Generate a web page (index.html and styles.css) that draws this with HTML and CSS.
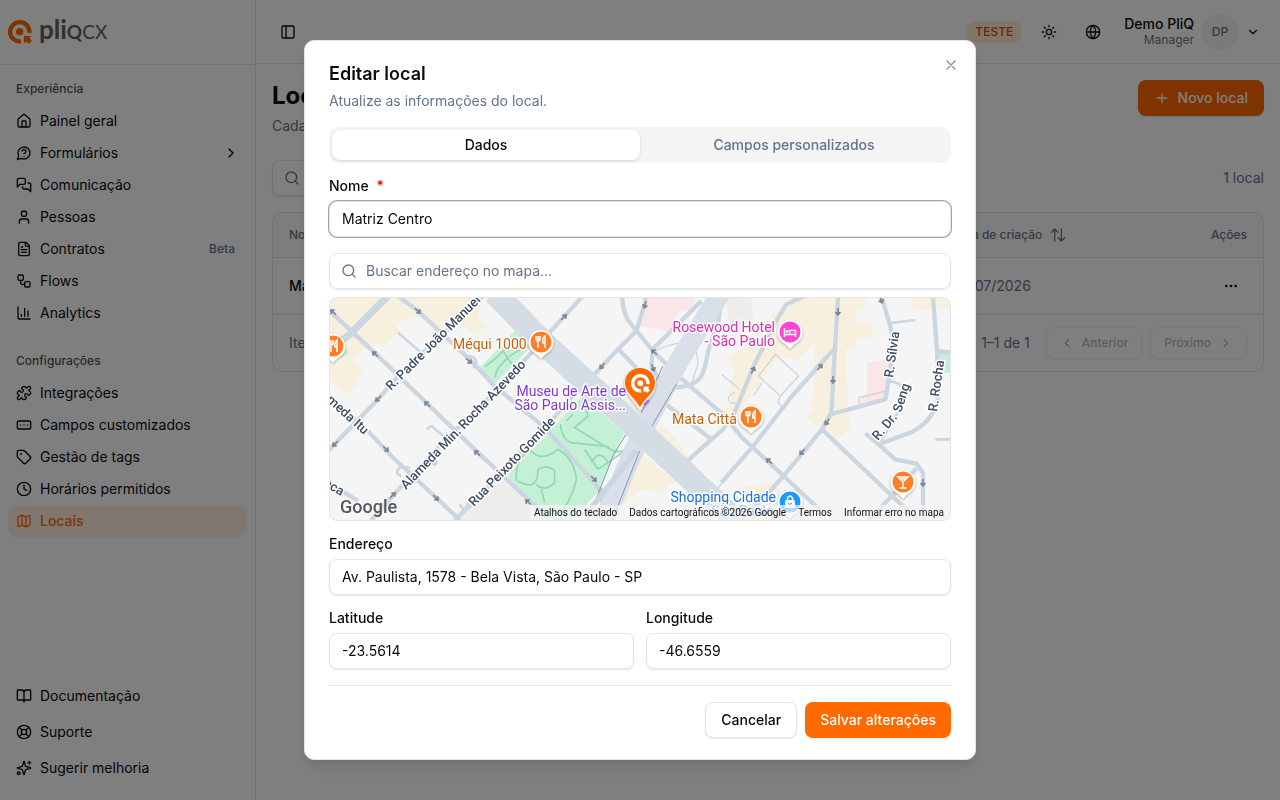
FILE: index.html
```html
<!DOCTYPE html>
<html lang="pt-BR">
<head>
<meta charset="utf-8">
<meta name="viewport" content="width=device-width, initial-scale=1">
<title>Locais</title>
<link rel="stylesheet" href="styles.css">
</head>
<body>
<svg class="sprite" aria-hidden="true">
  <symbol id="i-house" viewBox="0 0 24 24"><path d="M15 21v-8a1 1 0 0 0-1-1h-4a1 1 0 0 0-1 1v8"/><path d="M3 10a2 2 0 0 1 .709-1.528l7-5.999a2 2 0 0 1 2.582 0l7 5.999A2 2 0 0 1 21 10v9a2 2 0 0 1-2 2H5a2 2 0 0 1-2-2z"/></symbol>
  <symbol id="i-question" viewBox="0 0 24 24"><path d="M7.9 20A9 9 0 1 0 4 16.1L2 22Z"/><path d="M9.09 9a3 3 0 0 1 5.83 1c0 2-3 3-3 3M12 17h.01"/></symbol>
  <symbol id="i-messages" viewBox="0 0 24 24"><path d="M14 9a2 2 0 0 1-2 2H6l-4 4V4a2 2 0 0 1 2-2h8a2 2 0 0 1 2 2z"/><path d="M18 9h2a2 2 0 0 1 2 2v11l-4-4h-6a2 2 0 0 1-2-2v-1"/></symbol>
  <symbol id="i-user" viewBox="0 0 24 24"><path d="M19 21v-2a4 4 0 0 0-4-4H9a4 4 0 0 0-4 4v2"/><circle cx="12" cy="7" r="4"/></symbol>
  <symbol id="i-file" viewBox="0 0 24 24"><path d="M15 2H6a2 2 0 0 0-2 2v16a2 2 0 0 0 2 2h12a2 2 0 0 0 2-2V7Z"/><path d="M14 2v4a2 2 0 0 0 2 2h4M10 9H8M16 13H8M16 17H8"/></symbol>
  <symbol id="i-flow" viewBox="0 0 24 24"><rect x="3" y="3" width="8" height="8" rx="2"/><path d="M7 11v4a2 2 0 0 0 2 2h4"/><rect x="13" y="13" width="8" height="8" rx="2"/></symbol>
  <symbol id="i-chart" viewBox="0 0 24 24"><path d="M3 3v16a2 2 0 0 0 2 2h16M18 17V9M13 17V5M8 17v-3"/></symbol>
  <symbol id="i-puzzle" viewBox="0 0 24 24"><path d="M15.39 4.39a1 1 0 0 0 1.68-.474 2.5 2.5 0 1 1 3.014 3.015 1 1 0 0 0-.474 1.68l1.683 1.682a2.414 2.414 0 0 1 0 3.414L19.61 15.39a1 1 0 0 1-1.68-.474 2.5 2.5 0 1 0-3.014 3.015 1 1 0 0 1 .474 1.68l-1.683 1.682a2.414 2.414 0 0 1-3.414 0L8.61 19.61a1 1 0 0 0-1.68.474 2.5 2.5 0 1 1-3.014-3.015 1 1 0 0 0 .474-1.68l-1.683-1.682a2.414 2.414 0 0 1 0-3.414L4.39 8.61a1 1 0 0 1 1.68.474 2.5 2.5 0 1 0 3.014-3.015 1 1 0 0 1-.474-1.68l1.683-1.682a2.414 2.414 0 0 1 3.414 0z"/></symbol>
  <symbol id="i-fields" viewBox="0 0 24 24"><rect x="2" y="6" width="20" height="12" rx="2"/><path d="M12 12h.01M17 12h.01M7 12h.01"/></symbol>
  <symbol id="i-tag" viewBox="0 0 24 24"><path d="M12.586 2.586A2 2 0 0 0 11.172 2H4a2 2 0 0 0-2 2v7.172a2 2 0 0 0 .586 1.414l8.704 8.704a2.426 2.426 0 0 0 3.42 0l6.58-6.58a2.426 2.426 0 0 0 0-3.42z"/><circle cx="7.5" cy="7.5" r=".5"/></symbol>
  <symbol id="i-clock" viewBox="0 0 24 24"><circle cx="12" cy="12" r="10"/><path d="M12 6v6l4 2"/></symbol>
  <symbol id="i-map" viewBox="0 0 24 24"><path d="M14.106 5.553a2 2 0 0 0 1.788 0l3.659-1.83A1 1 0 0 1 21 4.619v12.764a1 1 0 0 1-.553.894l-4.553 2.277a2 2 0 0 1-1.788 0l-4.212-2.106a2 2 0 0 0-1.788 0l-3.659 1.83A1 1 0 0 1 3 19.381V6.618a1 1 0 0 1 .553-.894l4.553-2.277a2 2 0 0 1 1.788 0zM15 5.764v15M9 3.236v15"/></symbol>
  <symbol id="i-book" viewBox="0 0 24 24"><path d="M12 7v14M3 18a1 1 0 0 1-1-1V4a1 1 0 0 1 1-1h5a4 4 0 0 1 4 4 4 4 0 0 1 4-4h5a1 1 0 0 1 1 1v13a1 1 0 0 1-1 1h-6a3 3 0 0 0-3 3 3 3 0 0 0-3-3z"/></symbol>
  <symbol id="i-buoy" viewBox="0 0 24 24"><circle cx="12" cy="12" r="10"/><circle cx="12" cy="12" r="4"/><path d="m4.93 4.93 4.24 4.24M14.83 9.17l4.24-4.24M14.83 14.83l4.24 4.24M9.17 14.83l-4.24 4.24"/></symbol>
  <symbol id="i-sparkles" viewBox="0 0 24 24"><path d="M9.937 15.5A2 2 0 0 0 8.5 14.063l-6.135-1.582a.5.5 0 0 1 0-.962L8.5 9.936A2 2 0 0 0 9.937 8.5l1.582-6.135a.5.5 0 0 1 .963 0L14.063 8.5A2 2 0 0 0 15.5 9.937l6.135 1.581a.5.5 0 0 1 0 .964L15.5 14.063a2 2 0 0 0-1.437 1.437l-1.582 6.135a.5.5 0 0 1-.963 0zM20 2v4M22 4h-4"/><circle cx="4" cy="20" r="2"/></symbol>
  <symbol id="i-right" viewBox="0 0 24 24"><path d="m9 18 6-6-6-6"/></symbol>
  <symbol id="i-left" viewBox="0 0 24 24"><path d="m15 18-6-6 6-6"/></symbol>
  <symbol id="i-down" viewBox="0 0 24 24"><path d="m6 9 6 6 6-6"/></symbol>
  <symbol id="i-panel" viewBox="0 0 24 24"><rect x="3" y="3" width="18" height="18" rx="2"/><path d="M9 3v18"/></symbol>
  <symbol id="i-sun" viewBox="0 0 24 24"><circle cx="12" cy="12" r="4"/><path d="M12 2v2M12 20v2M4.93 4.93l1.41 1.41M17.66 17.66l1.41 1.41M2 12h2M20 12h2M6.34 17.66l-1.41 1.41M19.07 4.93l-1.41 1.41"/></symbol>
  <symbol id="i-globe" viewBox="0 0 24 24"><circle cx="12" cy="12" r="10"/><path d="M12 2a14.5 14.5 0 0 0 0 20 14.5 14.5 0 0 0 0-20M2 12h20"/></symbol>
  <symbol id="i-plus" viewBox="0 0 24 24"><path d="M5 12h14M12 5v14"/></symbol>
  <symbol id="i-search" viewBox="0 0 24 24"><circle cx="11" cy="11" r="8"/><path d="m21 21-4.3-4.3"/></symbol>
  <symbol id="i-sort" viewBox="0 0 24 24"><path d="M7 21V3M2 8l5-5 5 5M17 3v18M12 16l5 5 5-5"/></symbol>
  <symbol id="i-dots" viewBox="0 0 24 24"><g fill="currentColor"><circle cx="12" cy="12" r="1"/><circle cx="19" cy="12" r="1"/><circle cx="5" cy="12" r="1"/></g></symbol>
  <symbol id="i-close" viewBox="0 0 24 24"><path d="M18 6 6 18M6 6l12 12"/></symbol>
  <symbol id="brand" viewBox="0 0 72 72"><path d="M64 39A29 29 0 1 0 39 64" fill="none" stroke="currentColor" stroke-width="13" stroke-linecap="butt"/><circle cx="35" cy="35" r="11" fill="currentColor" stroke="none"/><path d="M48 48H70L64 54 71 62 62 71 54 64 48 70Z" fill="currentColor" stroke="currentColor" stroke-width="1" stroke-linejoin="round"/></symbol>
  <symbol id="drop" viewBox="0 0 28 32"><path d="M14 1A12.500 12.500 0 0 1 22 23Q17 26 14 30 11 26 6 23A12.500 12.500 0 0 1 14 1Z" fill="#fff"/></symbol>
  <symbol id="arrow" viewBox="-5 -5 10 10"><path d="M-4 0H3M0 -2.500L3 0 0 2.500" fill="#7b8896" stroke="#7b8896" stroke-width="1.600"/></symbol>
</svg>

<div class="app">
  <aside class="sidebar">
    <a class="brand" href="#" aria-label="pliQcx"><svg class="brand-mark"><use href="#brand"/></svg><span class="brand-name">pli<span class="brand-cap">Q</span><span class="brand-cap brand-thin">CX</span></span></a>
    <nav class="nav">
      <h2 class="nav-title">Experiência</h2>
      <a class="nav-item" href="#"><svg class="icon"><use href="#i-house"/></svg>Painel geral</a>
      <a class="nav-item" href="#"><svg class="icon"><use href="#i-question"/></svg>Formulários<svg class="icon end"><use href="#i-right"/></svg></a>
      <a class="nav-item" href="#"><svg class="icon"><use href="#i-messages"/></svg>Comunicação</a>
      <a class="nav-item" href="#"><svg class="icon"><use href="#i-user"/></svg>Pessoas</a>
      <a class="nav-item" href="#"><svg class="icon"><use href="#i-file"/></svg>Contratos<span class="beta end">Beta</span></a>
      <a class="nav-item" href="#"><svg class="icon"><use href="#i-flow"/></svg>Flows</a>
      <a class="nav-item" href="#"><svg class="icon"><use href="#i-chart"/></svg>Analytics</a>
    </nav>
    <nav class="nav">
      <h2 class="nav-title">Configurações</h2>
      <a class="nav-item" href="#"><svg class="icon"><use href="#i-puzzle"/></svg>Integrações</a>
      <a class="nav-item" href="#"><svg class="icon"><use href="#i-fields"/></svg>Campos customizados</a>
      <a class="nav-item" href="#"><svg class="icon"><use href="#i-tag"/></svg>Gestão de tags</a>
      <a class="nav-item" href="#"><svg class="icon"><use href="#i-clock"/></svg>Horários permitidos</a>
      <a class="nav-item active" href="#" aria-current="page"><svg class="icon"><use href="#i-map"/></svg>Locais</a>
    </nav>
    <nav class="nav nav-foot">
      <a class="nav-item" href="#"><svg class="icon"><use href="#i-book"/></svg>Documentação</a>
      <a class="nav-item" href="#"><svg class="icon"><use href="#i-buoy"/></svg>Suporte</a>
      <a class="nav-item" href="#"><svg class="icon"><use href="#i-sparkles"/></svg>Sugerir melhoria</a>
    </nav>
  </aside>

  <div class="page">
    <header class="topbar">
      <button class="icon-btn" aria-label="Alternar menu"><svg class="icon"><use href="#i-panel"/></svg></button>
      <div class="topbar-right">
        <span class="chip">TESTE</span>
        <button class="icon-btn" aria-label="Tema"><svg class="icon"><use href="#i-sun"/></svg></button>
        <button class="icon-btn" aria-label="Idioma"><svg class="icon"><use href="#i-globe"/></svg></button>
        <button class="account"><span class="who"><span class="who-name">Demo PliQ</span><span class="who-role">Manager</span></span><span class="avatar">DP</span><svg class="icon small"><use href="#i-down"/></svg></button>
      </div>
    </header>
    <main class="content">
      <div class="row-between head">
        <div><h1 class="title">Locais</h1><p class="muted">Cadastre os locais</p></div>
        <button class="btn primary wide"><svg class="icon"><use href="#i-plus"/></svg>Novo local</button>
      </div>
      <div class="row-between tools">
        <label class="search short"><svg class="icon"><use href="#i-search"/></svg><input class="search-input" type="search" aria-label="Buscar"></label>
        <span class="muted">1 local</span>
      </div>
      <div class="card">
        <table class="table">
          <thead><tr><th class="col-name">Nome</th><th class="col-date"><span class="sort">Data de criação<svg class="icon"><use href="#i-sort"/></svg></span></th><th class="col-act">Ações</th></tr></thead>
          <tbody><tr><td class="strong">Matriz</td><td>02/07/2026</td><td class="col-act"><button class="icon-btn" aria-label="Ações"><svg class="icon"><use href="#i-dots"/></svg></button></td></tr></tbody>
        </table>
        <div class="pager">
          <span>Itens</span>
          <div class="pager-right"><span>1–1 de 1</span>
            <div class="pager-btns"><button class="btn outline sm" disabled><svg class="icon small"><use href="#i-left"/></svg>Anterior</button><button class="btn outline sm" disabled>Próximo<svg class="icon small"><use href="#i-right"/></svg></button></div>
          </div>
        </div>
      </div>
    </main>
  </div>
</div>

<div class="overlay">
  <form class="modal" role="dialog" aria-modal="true" aria-labelledby="dlg-title">
    <button class="close" type="button" aria-label="Fechar"><svg class="icon"><use href="#i-close"/></svg></button>
    <div class="modal-head"><h2 class="modal-title" id="dlg-title">Editar local</h2><p class="muted">Atualize as informações do local.</p></div>
    <div class="tabs" role="tablist"><button class="tab selected" type="button" role="tab" aria-selected="true">Dados</button><button class="tab" type="button" role="tab" aria-selected="false">Campos personalizados</button></div>
    <div class="field"><label class="label" for="nome">Nome <span class="req">*</span></label><input class="input focused" id="nome" value="Matriz Centro"></div>
    <div class="map-group">
      <label class="search"><svg class="icon"><use href="#i-search"/></svg><input class="search-input" type="text" aria-label="Buscar endereço no mapa" placeholder="Buscar endereço no mapa…"></label>
      <div class="map">
        <svg class="map-art" viewBox="2 2 620 222" preserveAspectRatio="xMidYMid slice" role="img" aria-label="Mapa da região da Avenida Paulista">
          <g transform="scale(.33333)">
            <g fill="#f8f0df">
              <path d="M0 0H190L460 0 450 60 475 90 440 118 400 80 340 112 280 60 245 65 205 85 215 105 165 155 140 140 105 160 75 195 105 225 80 245 95 265 55 295 0 250Z"/>
              <path d="M505 522L720 335 740 350 530 545ZM885 320L930 290 975 350 935 375ZM960 415L1005 385 1115 520 1080 550ZM935 470L1050 560 1020 570 1005 590 940 580 870 640 905 530Z"/>
              <path d="M1402 0H1617L1607 40 1587 45 1582 85 1625 80 1638 105 1622 128 1587 130 1582 155 1552 160 1562 340 1567 390 1532 432 1492 410 1437 365 1452 340 1457 200 1462 140 1412 190 1350 185 1317 230 1270 300 1220 355 1165 390 1170 360 1210 320 1200 280 1220 230 1205 190 1260 140 1310 80Z"/>
              <path d="M1745 0H1870V35L1757 43ZM1230 575L1332 560 1470 672H1210Z"/>
            </g>
            <path d="M380 672L540 540 690 672ZM1190 0H1270L1275 70 1210 110Z" fill="#efedec"/>
            <path d="M455 215L565 100 612 150 500 263ZM538 540L765 300 888 412 815 580 735 672H670ZM1830 173H1870V230H1842ZM30 165L55 155 62 175 40 185Z" fill="#c4f1d6"/>
            <path d="M965 0H1102L1095 42 1050 48 1030 108 938 90ZM1617 200L1682 190 1675 305 1587 325 1617 290Z" fill="#fbe6e7"/>
            <g fill="none" stroke="#cbd6e0" stroke-width="13" stroke-linejoin="round">
              <path d="M0 40L145 175 300 325 450 470 660 665M210 0L270 45 430 195 500 270 650 395 800 560 820 590M0 465L150 310 220 230 350 110 465 0M0 298L120 405 190 480 330 610 395 672M0 565L50 590 90 615M130 672L230 560 385 400 500 290 615 165M660 115L705 65 765 0M380 672L430 625 560 490 640 410 755 275M795 240L870 160 925 105 952 20V0"/>
              <path d="M870 158L925 215M882 0Q885 60 910 85L975 165 1045 235 1185 355 1242 425 1367 540 1490 655M968 165L1030 105 1120 15M975 160L970 210 1000 260Q1030 285 1090 265C1150 240 1120 170 1170 90L1180 0M975 295L1150 430M1070 503L1150 430 1185 400 1220 350 1277 210 1342 80 1375 25 1430 0M1180 560L1272 455 1392 300 1517 160M1530 0L1510 350 1482 400 1367 540 1322 590 1240 672M1507 355L1672 310 1682 255 1697 150 1687 90 1660 0M1815 0L1827 165 1832 290Q1825 370 1752 408L1652 445 1702 490 1765 503 1785 530V672M1612 412L1652 445M1482 400L1692 600 1770 672M1765 518L1692 600 1620 672M1827 165L1870 170"/>
              <path d="M0 160L60 120 180 0" stroke-width="22"/>
              <path d="M210 110L280 170M295 400L310 390 370 440M245 518C220 500 190 530 220 540M420 180C450 180 450 210 435 215M310 500Q325 512 325 495M395 625L410 645 420 620M1680 82L1762 72M1822 430H1870M1682 255Q1745 265 1728 310T1652 445" stroke-width="8"/>
              <path d="M1292 240L1342 175 1412 240 1357 300ZM1357 300L1350 320 1367 335M1302 260L1277 300M970 170Q1110 100 1110 205L1085 280M1000 280V350L950 420M1180 235L1235 280M1220 290C1190 300 1200 330 1225 320M1150 600L1260 470M1592 325V305Q1620 300 1672 285" stroke-width="4"/>
            </g>
            <g fill="none" stroke="#93d8b4" stroke-width="5">
              <path d="M470 212Q520 180 560 120M500 245Q510 190 600 150M525 165L555 210"/>
              <path d="M698 385Q700 430 730 440L840 452Q862 480 905 455M765 305L780 360 740 395 850 462M735 355L715 375M810 520L905 455M810 520L770 460M790 500Q815 455 840 500"/>
              <path d="M565 555Q560 480 610 465 640 500 690 460 740 490 745 550 735 600 705 640M570 555Q630 590 630 520 660 505 680 525V560Q650 590 625 565M640 580L650 620M820 575V620L870 625"/>
            </g>
            <path d="M1185 -20L1050 200 965 365 910 480 830 672" fill="none" stroke="#d8dfe8" stroke-width="60"/>
            <path d="M900 405L855 480 780 672M1005 210L940 350M935 465L860 655M1045 265L960 410" fill="none" stroke="#8195b5" stroke-width="3"/>
            <path d="M770 660L925 465" fill="none" stroke="#cbd6e0" stroke-width="16"/>
            <path d="M500 -10L645 140 930 400 1150 605 1230 680" fill="none" stroke="#d4dde5" stroke-width="72"/>
          </g>
          <g>
            <use href="#arrow" width="10" height="10" x="-5" y="-5" transform="translate(5 16) rotate(222)"/>
            <use href="#arrow" width="10" height="10" x="-5" y="-5" transform="translate(90 15) rotate(42)"/>
            <use href="#arrow" width="10" height="10" x="-5" y="-5" transform="translate(47 58) rotate(222)"/>
            <use href="#arrow" width="10" height="10" x="-5" y="-5" transform="translate(141 65) rotate(42)"/>
            <use href="#arrow" width="10" height="10" x="-5" y="-5" transform="translate(50 103) rotate(135)"/>
            <use href="#arrow" width="10" height="10" x="-5" y="-5" transform="translate(99 108) rotate(222)"/>
            <use href="#arrow" width="10" height="10" x="-5" y="-5" transform="translate(7 148) rotate(135)"/>
            <use href="#arrow" width="10" height="10" x="-5" y="-5" transform="translate(58 153) rotate(45)"/>
            <use href="#arrow" width="10" height="10" x="-5" y="-5" transform="translate(149 157) rotate(222)"/>
            <use href="#arrow" width="10" height="10" x="-5" y="-5" transform="translate(65 199) rotate(-45)"/>
            <use href="#arrow" width="10" height="10" x="-5" y="-5" transform="translate(108 202) rotate(45)"/>
            <use href="#arrow" width="10" height="10" x="-5" y="-5" transform="translate(200 206) rotate(222)"/>
            <use href="#arrow" width="10" height="10" x="-5" y="-5" transform="translate(236 21) rotate(-45)"/>
            <use href="#arrow" width="10" height="10" x="-5" y="-5" transform="translate(317 9) rotate(105)"/>
            <use href="#arrow" width="10" height="10" x="-5" y="-5" transform="translate(274 70) rotate(130)"/>
            <use href="#arrow" width="10" height="10" x="-5" y="-5" transform="translate(326 56) rotate(222)"/>
            <use href="#arrow" width="10" height="10" x="-5" y="-5" transform="translate(325 72) rotate(70)"/>
            <use href="#arrow" width="10" height="10" x="-5" y="-5" transform="translate(266 183) rotate(45)"/>
            <use href="#arrow" width="10" height="10" x="-5" y="-5" transform="translate(510 16) rotate(92)"/>
            <use href="#arrow" width="10" height="10" x="-5" y="-5" transform="translate(505 84) rotate(92)"/>
            <use href="#arrow" width="10" height="10" x="-5" y="-5" transform="translate(492 71) rotate(-50)"/>
            <use href="#arrow" width="10" height="10" x="-5" y="-5" transform="translate(425 74) rotate(-65)"/>
            <use href="#arrow" width="10" height="10" x="-5" y="-5" transform="translate(499 126) rotate(125)"/>
            <use href="#arrow" width="10" height="10" x="-5" y="-5" transform="translate(474 156) rotate(130)"/>
            <use href="#arrow" width="10" height="10" x="-5" y="-5" transform="translate(441 165) rotate(220)"/>
            <use href="#arrow" width="10" height="10" x="-5" y="-5" transform="translate(595 187) rotate(90)"/>
            <use href="#arrow" width="10" height="10" x="-5" y="-5" transform="translate(553 4) rotate(70)"/>
          </g>
          <g class="street">
            <text transform="translate(63 95) rotate(-45)">R. Padre João Manuel</text>
            <text transform="translate(78 194) rotate(-46)">Alameda Min. Rocha Azevedo</text>
            <text transform="translate(146 211) rotate(-46)">Rua Peixoto Gomide</text>
            <text text-anchor="end" transform="translate(36 139) rotate(42)">Alameda Itu</text>
            <text text-anchor="end" transform="translate(13 200) rotate(30)">Franca</text>
            <text transform="translate(565 82) rotate(-82)">R. Sílvia</text>
            <text transform="translate(609 116) rotate(-82)">R. Rocha</text>
            <text transform="translate(550 145) rotate(-50)">R. Dr.</text>
            <text transform="translate(573 117) rotate(-72)">Seng</text>
          </g>
          <g class="place">
            <text class="food" x="125" y="53">Méqui 1000</text>
            <text class="museum" text-anchor="end" x="298" y="100">Museu de Arte de</text>
            <text class="museum" text-anchor="end" x="298" y="114">São Paulo Assis...</text>
            <text class="hotel" text-anchor="end" x="447" y="36">Rosewood Hotel</text>
            <text class="hotel" text-anchor="end" x="447" y="50">- São Paulo</text>
            <text class="food" x="344" y="128">Mata Città</text>
            <text class="shop" text-anchor="end" x="448" y="206">Shopping Cidade</text>
            <text class="shop" text-anchor="end" x="446" y="220">São Paulo</text>
          </g>
          <g class="pins">
            <g transform="translate(-9 37)"><use href="#drop" width="28" height="32"/><circle cx="14" cy="13" r="10.500" fill="#ff7f27"/><path d="M10 7v3q0 2 2 2t2-2V7M12 7v12M18 19V7q-3 2-2 7h2" fill="none" stroke="#fff" stroke-width="1.500"/></g>
            <g transform="translate(199 33)"><use href="#drop" width="28" height="32"/><circle cx="14" cy="13" r="10.500" fill="#ff7f27"/><path d="M9 7v3q0 2 2 2t2-2V7M11 7v12M18 19V7q-3 2-2 7h2" fill="none" stroke="#fff" stroke-width="1.500"/></g>
            <g transform="translate(409 108)"><use href="#drop" width="28" height="32"/><circle cx="14" cy="13" r="10.500" fill="#ff7f27"/><path d="M9 7v3q0 2 2 2t2-2V7M11 7v12M18 19V7q-3 2-2 7h2" fill="none" stroke="#fff" stroke-width="1.500"/></g>
            <g transform="translate(448 23)"><use href="#drop" width="28" height="32"/><circle cx="14" cy="13" r="10.500" fill="#ff47cf"/><path d="M8.500 9v9M8.500 15.500h11V18M19.500 15v-3.500h-6V15" fill="none" stroke="#fff" stroke-width="1.500"/><circle cx="11" cy="12.500" r="1.300" fill="#fff"/></g>
            <g transform="translate(561 173)"><use href="#drop" width="28" height="32"/><circle cx="14" cy="13" r="10.500" fill="#ff7f27"/><path d="M9 8h10l-5 5zM14 13v6M10.500 19h7M11 10h6" fill="none" stroke="#fff" stroke-width="1.500"/></g>
            <g transform="translate(448 193)"><use href="#drop" width="28" height="32"/><circle cx="14" cy="13" r="10.500" fill="#1a9bff"/><path d="M9.500 11h9l1 8h-11z" fill="#fff"/><path d="M11.500 12V9q2.500-4 5 0v3" fill="none" stroke="#fff" stroke-width="1.500"/><path d="M12 14q2 3 4 0" fill="none" stroke="#1a9bff"/></g>
            <g transform="translate(296 71)"><path d="M16 2C7 2 0 9 0 17 0 27 9 33 16 45 23 33 32 27 32 17 32 9 25 2 16 2Z" fill="#ececf0"/><path d="M25 33L20 38" fill="none" stroke="#9a5ee8" stroke-width="2"/><path d="M16 1C7.500 1 1 7.500 1 16 1 25 10 30 16 40 22 30 31 25 31 16 31 7.500 24.500 1 16 1Z" fill="#ff6900"/><use class="pin-brand" href="#brand" x="7" y="7" width="19" height="19"/></g>
          </g>
        </svg>
        <span class="google">Google</span>
        <div class="credits"><button class="credit" type="button">Atalhos do teclado</button><span class="credit">Dados cartográficos ©2026 Google</span><a class="credit" href="#">Termos</a><a class="credit" href="#">Informar erro no mapa</a></div>
      </div>
    </div>
    <div class="field"><label class="label" for="endereco">Endereço</label><input class="input" id="endereco" value="Av. Paulista, 1578 - Bela Vista, São Paulo - SP"></div>
    <div class="pair">
      <div class="field"><label class="label" for="lat">Latitude</label><input class="input" id="lat" value="-23.5614"></div>
      <div class="field"><label class="label" for="lng">Longitude</label><input class="input" id="lng" value="-46.6559"></div>
    </div>
    <div class="modal-foot"><button class="btn outline" type="button">Cancelar</button><button class="btn primary" type="submit">Salvar alterações</button></div>
  </form>
</div>
</body>
</html>
```
FILE: styles.css
```css
*, *::before, *::after { box-sizing: border-box; }
body { margin: 0; font-family: Inter, "Liberation Sans", sans-serif; font-size: 14px; line-height: 20px; color: #0a0a0a; background: #fff; }
h1, h2, p { margin: 0; }
button, input { font: inherit; color: inherit; }
button { border: 0; background: none; padding: 0; cursor: pointer; }
a { color: inherit; text-decoration: none; }
.sprite { position: absolute; width: 0; height: 0; }
.icon { width: 16px; height: 16px; flex: none; fill: none; stroke: currentColor; stroke-width: 2; stroke-linecap: round; stroke-linejoin: round; }
.icon.small { width: 14px; height: 14px; }
.muted { color: #64748b; }

.app { display: flex; min-height: 100vh; }
.sidebar { width: 256px; flex: none; display: flex; flex-direction: column; border-right: 1px solid #e5e5e5; }
.brand { height: 65px; display: flex; align-items: center; gap: 7px; padding: 0 8px; border-bottom: 1px solid #e5e5e5; }
.brand-mark { width: 24px; height: 24px; color: #ff6900; flex: none; }
.brand-name { padding-bottom: 4px; font-family: Lato, sans-serif; font-size: 26px; line-height: 32px; font-weight: 700; color: #6b5f58; }
.brand-cap { font-size: 19px; }
.brand-thin { font-weight: 400; }
.nav { padding: 8px; display: flex; flex-direction: column; }
.nav-title { height: 32px; padding: 0 8px; display: flex; align-items: center; font-size: 12px; font-weight: 500; color: #545454; }
.nav-item { height: 32px; padding: 0 8px; display: flex; align-items: center; gap: 8px; border-radius: 8px; }
.nav-item.active { background: #ffeee0; color: #ff6900; font-weight: 500; }
.nav-foot { margin-top: auto; padding-bottom: 16px; gap: 4px; }
.end { margin-left: auto; }
.beta { font-size: 12px; font-weight: 500; color: #64748b; padding-right: 4px; }

.page { flex: 1; min-width: 0; }
.topbar { height: 64px; padding: 0 16px; display: flex; align-items: center; justify-content: space-between; border-bottom: 1px solid #e5e5e5; }
.topbar-right { display: flex; align-items: center; gap: 12px; }
.icon-btn { width: 32px; height: 32px; display: inline-flex; align-items: center; justify-content: center; }
.chip { padding: 1px 8px; border-radius: 8px; background: #ffedd4; color: #e7460a; font-size: 12px; font-weight: 500; }
.account { display: flex; align-items: center; gap: 8px; padding: 0 4px 0 3px; }
.who { display: flex; flex-direction: column; align-items: flex-end; line-height: 16px; }
.who-name { font-weight: 500; }
.who-role { font-size: 12px; color: #64748b; }
.avatar { width: 36px; height: 36px; border-radius: 50%; background: #f4f4f5; display: grid; place-items: center; font-size: 12px; font-weight: 500; color: #64748b; }
.content { padding: 16px; }
.row-between { display: flex; justify-content: space-between; align-items: center; }
.head { align-items: flex-start; margin-bottom: 24px; }
.title { font-size: 24px; line-height: 32px; font-weight: 700; margin-bottom: 4px; }
.tools { margin-bottom: 16px; }
.btn { height: 36px; padding: 0 15px; display: inline-flex; align-items: center; justify-content: center; gap: 8px; border-radius: 8px; font-weight: 500; box-shadow: 0 1px 2px rgba(0, 0, 0, .1); }
.wide { padding: 0 16px; }
.primary { background: #ff6900; color: #fff; }
.outline { border: 1px solid #e5e5e5; background: #fff; }
.sm { height: 32px; padding: 0 13px; font-size: 12px; gap: 8px; color: #64748b; }
.sm:disabled { opacity: .5; }
.search { height: 36px; display: flex; align-items: center; gap: 9px; padding: 0 11px; border: 1px solid #e5e5e5; border-radius: 8px; box-shadow: 0 1px 2px rgba(0, 0, 0, .1); color: #64748b; }
.short { width: 320px; }
.search-input { flex: 1; min-width: 0; border: 0; outline: 0; padding: 0; background: none; }
.search-input::placeholder { color: #64748b; opacity: 1; }
.card { border: 1px solid #e5e5e5; border-radius: 10px; overflow: hidden; color: #64748b; }
.table { width: 100%; border-collapse: collapse; table-layout: fixed; }
.table th { height: 44px; padding: 0 16px; text-align: left; font-size: 12px; font-weight: 500; background: #fafafa; border-bottom: 1px solid #e5e5e5; }
.table td { height: 57px; padding: 0 16px; border-bottom: 1px solid #e5e5e5; }
.col-name { width: 67%; }
.col-date { width: 20%; }
.table .col-act { text-align: right; color: inherit; }
.table td.col-act { color: #0a0a0a; }
.strong { font-weight: 500; color: #0a0a0a; }
.sort { display: inline-flex; align-items: center; gap: 8px; }
.pager { height: 56px; padding: 0 16px; display: flex; align-items: center; justify-content: space-between; }
.pager-right { display: flex; align-items: center; gap: 16px; }
.pager-btns { display: flex; gap: 8px; }

.overlay { position: fixed; inset: 0; display: flex; align-items: center; justify-content: center; background: rgba(0, 0, 0, .5); }
.modal { position: relative; width: 672px; max-width: calc(100% - 32px); max-height: calc(100% - 32px); overflow: auto; padding: 24px 24px 21px; display: flex; flex-direction: column; gap: 16px; background: #fff; border: 1px solid #e5e5e5; border-radius: 10px; box-shadow: 0 10px 15px -3px rgba(0, 0, 0, .1), 0 4px 6px -4px rgba(0, 0, 0, .1); }
.close { position: absolute; top: 16px; right: 16px; width: 16px; height: 16px; color: #8593a8; }
.modal-head { display: flex; flex-direction: column; gap: 8px; }
.modal-title { font-size: 18px; line-height: 18px; font-weight: 600; }
.tabs { display: grid; grid-template-columns: 1fr 1fr; height: 36px; padding: 3px; border-radius: 10px; background: #f4f4f5; }
.tab { border-radius: 8px; font-weight: 500; color: #64748b; }
.tab.selected { background: #fff; color: #0a0a0a; box-shadow: 0 1px 3px rgba(0, 0, 0, .12); }
.field { display: flex; flex-direction: column; gap: 8px; min-width: 0; }
.label { line-height: 14px; font-weight: 500; }
.req { color: #e7000b; margin-left: 4px; }
.input { width: 100%; height: 36px; padding: 0 12px 1px; border: 1px solid #e5e5e5; border-radius: 8px; outline: 0; background: #fff; box-shadow: 0 1px 2px rgba(0, 0, 0, .1); }
.input.focused { box-shadow: 0 0 0 1px #a1a1a1; }
.map-group { display: flex; flex-direction: column; gap: 8px; }
.map { position: relative; height: 224px; border: 1px solid #e5e5e5; border-radius: 8px; overflow: hidden; background: #f5f5f5; }
.map-art { display: block; width: 100%; height: 100%; font-family: Roboto, sans-serif; font-size: 14px; }
.map-art text { stroke: #fff; stroke-width: 3px; stroke-linejoin: round; paint-order: stroke; }
.street { fill: #3d4b63; font-weight: 500; font-size: 13px; }
.food { fill: #cf5c08; }
.museum { fill: #8038d8; }
.hotel { fill: #e02cad; }
.shop { fill: #1a6ee8; }
.pins { filter: drop-shadow(0 1px 1px rgba(0, 0, 0, .3)); }
.pin-brand { color: #fff; }
.google { position: absolute; left: 10px; bottom: 3px; font-family: Roboto, sans-serif; font-size: 18px; font-weight: 500; color: #54575b; text-shadow: 0 0 2px #fff; }
.credits { position: absolute; right: 0; bottom: 0; display: flex; gap: 12px; padding: 0 6px 0 4px; background: rgba(245, 245, 245, .7); font-family: Roboto, sans-serif; font-size: 10px; line-height: 15px; color: #111; }
.pair { display: grid; grid-template-columns: 1fr 1fr; gap: 12px; }
.modal-foot { display: flex; justify-content: flex-end; gap: 8px; padding-top: 16px; border-top: 1px solid #e5e5e5; }

@media (max-width: 720px) {
  .sidebar { display: none; }
  .pair { grid-template-columns: 1fr; }
}
```
